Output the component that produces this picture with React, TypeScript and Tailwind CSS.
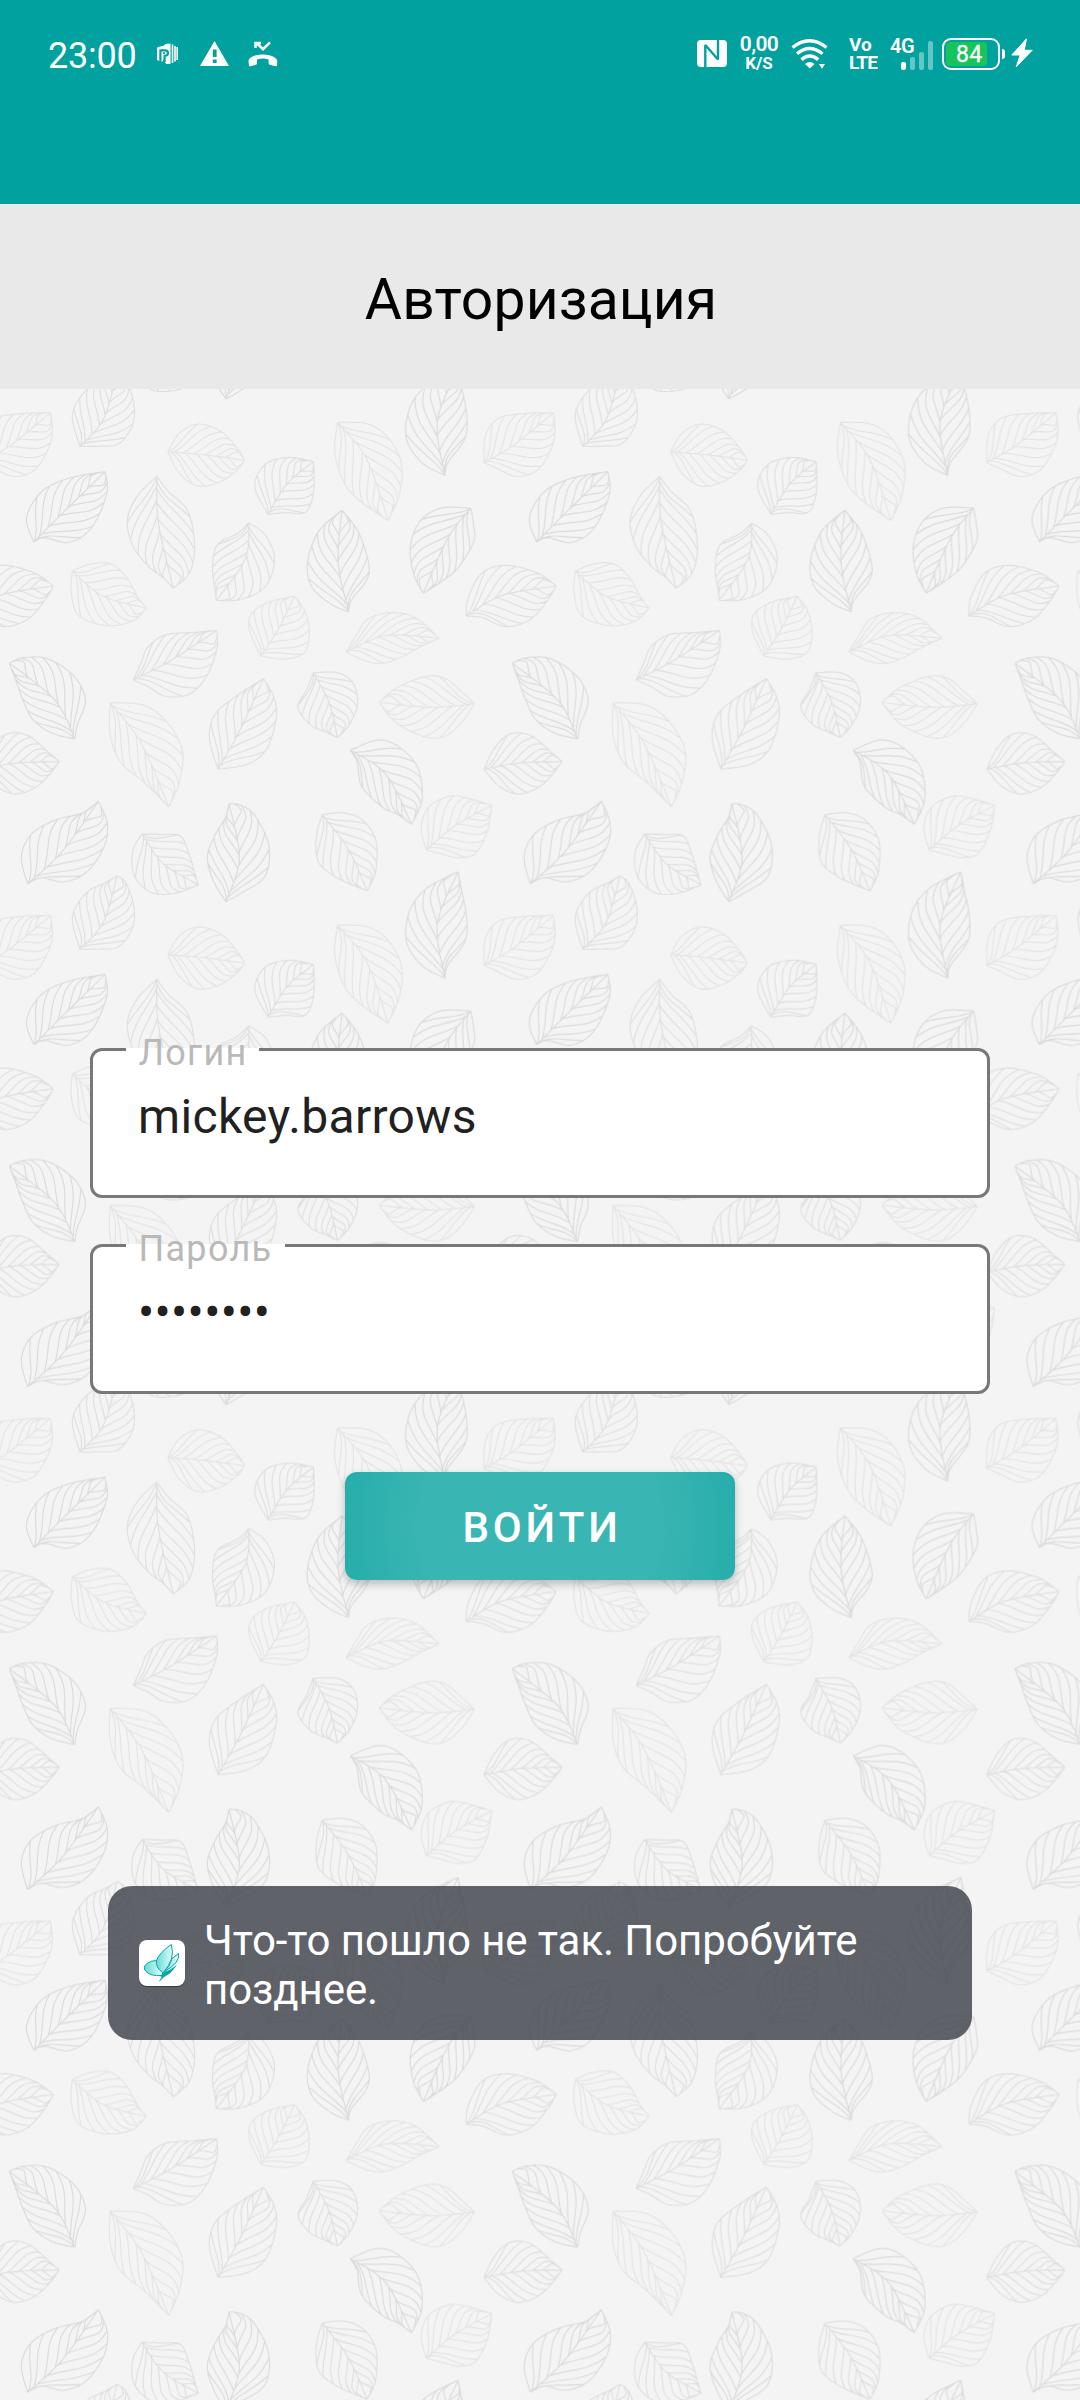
import React from "react";

type Pt = [number, number];

interface LeafShape {
  base: Pt;
  tip: Pt;
  mid: Pt;
  a: Pt[];
  b: Pt[];
  tone: string;
}

const DARK = "#dbdbdb";
const MEDIUM = "#dfdfdf";
const LIGHT = "#e4e4e4";

// Side length of one repeat of the wallpaper, in leaf units
const TILE = 1460;

const LEAVES: LeafShape[] = [
  { base: [98, 470], tip: [305, 266], mid: [180, 388], a: [[77, 400], [120, 325], [200, 285]], b: [[130, 458], [200, 471], [265, 430], [310, 330]], tone: DARK },
  { base: [232, 193], tip: [340, -20], mid: [300, 115], a: [[210, 100], [250, 30], [305, 0]], b: [[290, 192], [345, 185], [385, 130], [388, 65], [365, 0]], tone: MEDIUM },
  { base: [1405, 240], tip: [1607, 95], mid: [1490, 190], a: [[1410, 160], [1450, 110], [1530, 97]], b: [[1440, 255], [1500, 280], [1560, 262], [1600, 200], [1612, 150]], tone: LIGHT },
  { base: [487, 208], tip: [710, 233], mid: [600, 218], a: [[520, 155], [575, 128], [640, 148], [690, 200]], b: [[520, 270], [575, 308], [640, 295], [690, 260]], tone: LIGHT },
  { base: [455, 280], tip: [503, 605], mid: [460, 415], a: [[400, 335], [370, 405], [385, 480], [430, 540], [475, 575]], b: [[490, 325], [545, 380], [565, 480], [550, 560]], tone: MEDIUM },
  { base: [778, 390], tip: [910, 237], mid: [835, 300], a: [[740, 310], [770, 245], [840, 225]], b: [[830, 385], [885, 385], [908, 340], [912, 280]], tone: MEDIUM },
  { base: [722, 415], tip: [628, 640], mid: [712, 520], a: [[690, 445], [630, 480], [617, 550], [625, 610]], b: [[770, 450], [797, 520], [770, 600], [700, 637]], tone: MEDIUM },
  { base: [1012, 673], tip: [993, 378], mid: [982, 530], a: [[960, 650], [905, 600], [893, 530], [925, 440]], b: [[1020, 640], [1065, 580], [1070, 530], [1040, 440]], tone: DARK },
  { base: [980, 123], tip: [1127, 408], mid: [1065, 230], a: [[972, 210], [1000, 300], [1050, 355]], b: [[1065, 127], [1125, 165], [1165, 240], [1160, 330]], tone: LIGHT },
  { base: [1292, 277], tip: [1330, -32], mid: [1270, 120], a: [[1225, 240], [1180, 170], [1190, 80], [1240, 15]], b: [[1300, 240], [1350, 170], [1355, 100], [1340, 20]], tone: DARK },
  { base: [1367, 372], tip: [1229, 619], mid: [1300, 460], a: [[1280, 372], [1220, 410], [1192, 480], [1200, 560]], b: [[1375, 420], [1375, 470], [1330, 545], [1275, 590]], tone: DARK },
  { base: [1353, 685], tip: [1615, 598], mid: [1460, 625], a: [[1360, 630], [1400, 560], [1470, 538], [1560, 560]], b: [[1400, 690], [1470, 716], [1540, 695], [1590, 640]], tone: MEDIUM },
  { base: [210, 555], tip: [425, 662], mid: [300, 628], a: [[260, 535], [320, 533], [365, 570], [400, 630]], b: [[207, 620], [230, 685], [310, 713], [385, 700]], tone: LIGHT },
  { base: [387, 871], tip: [629, 727], mid: [500, 812], a: [[410, 820], [430, 775], [480, 740], [560, 733]], b: [[430, 890], [480, 918], [550, 912], [600, 860], [630, 780]], tone: MEDIUM },
  { base: [758, 802], tip: [855, 628], mid: [810, 720], a: [[725, 730], [730, 680], [780, 645]], b: [[830, 810], [885, 790], [898, 730], [885, 670]], tone: LIGHT },
  { base: [1005, 790], tip: [1275, 750], mid: [1120, 742], a: [[1035, 740], [1070, 693], [1140, 675], [1210, 692]], b: [[1060, 815], [1110, 823], [1165, 805], [1220, 775]], tone: LIGHT },
  { base: [217, 1042], tip: [27, 822], mid: [160, 930], a: [[150, 1025], [95, 985], [65, 925], [45, 870]], b: [[225, 1000], [248, 930], [215, 860], [140, 810], [70, 806]], tone: DARK },
  { base: [320, 937], tip: [490, 1240], mid: [410, 1055], a: [[320, 1030], [350, 1110], [420, 1170]], b: [[420, 945], [490, 1000], [530, 1080], [520, 1170]], tone: LIGHT },
  { base: [633, 1130], tip: [765, 867], mid: [700, 1010], a: [[608, 1040], [625, 970], [690, 915]], b: [[720, 1115], [775, 1070], [802, 980], [795, 920]], tone: MEDIUM },
  { base: [909, 850], tip: [980, 1038], mid: [955, 935], a: [[890, 900], [865, 950], [900, 1000], [945, 1022]], b: [[980, 850], [1025, 880], [1038, 940], [1015, 1000]], tone: MEDIUM },
  { base: [1378, 940], tip: [1101, 936], mid: [1250, 950], a: [[1340, 905], [1290, 865], [1230, 862], [1150, 895]], b: [[1340, 995], [1290, 1035], [1230, 1035], [1150, 995]], tone: LIGHT },
  { base: [1405, 1130], tip: [1632, 1108], mid: [1510, 1112], a: [[1435, 1070], [1480, 1028], [1540, 1032], [1600, 1080]], b: [[1450, 1180], [1505, 1202], [1560, 1185], [1600, 1150]], tone: MEDIUM },
  { base: [1017, 1075], tip: [1195, 1290], mid: [1120, 1145], a: [[1037, 1110], [1050, 1180], [1110, 1240], [1155, 1262]], b: [[1100, 1045], [1165, 1070], [1215, 1130], [1225, 1220]], tone: DARK },
  { base: [1238, 1365], tip: [1428, 1235], mid: [1320, 1295], a: [[1223, 1300], [1245, 1240], [1310, 1208], [1380, 1220]], b: [[1280, 1375], [1330, 1387], [1380, 1375], [1415, 1310]], tone: LIGHT },
  { base: [80, 1463], tip: [286, 1223], mid: [180, 1370], a: [[62, 1385], [90, 1320], [160, 1278], [240, 1257]], b: [[120, 1445], [185, 1457], [250, 1430], [300, 1360], [312, 1290]], tone: DARK },
  { base: [412, 1318], tip: [576, 1466], mid: [475, 1405], a: [[470, 1320], [525, 1325], [550, 1380], [565, 1430]], b: [[385, 1370], [390, 1440], [440, 1488], [510, 1490]], tone: MEDIUM },
  { base: [656, 1515], tip: [665, 1230], mid: [695, 1390], a: [[620, 1455], [602, 1385], [625, 1320], [655, 1270]], b: [[700, 1490], [770, 1440], [780, 1350], [740, 1265], [700, 1235]], tone: DARK },
  { base: [935, 1262], tip: [1066, 1483], mid: [1010, 1360], a: [[918, 1330], [925, 1400], [970, 1440], [1020, 1465]], b: [[1000, 1257], [1055, 1280], [1092, 1340], [1090, 1430]], tone: MEDIUM },
];

// Samples a Catmull-Rom spline through the points
function sample(points: Pt[]): Pt[] {
  const out: Pt[] = [];
  for (let i = 0; i < points.length - 1; i++) {
    const p0 = points[Math.max(i - 1, 0)];
    const p1 = points[i];
    const p2 = points[i + 1];
    const p3 = points[Math.min(i + 2, points.length - 1)];
    for (let s = 0; s < 10; s++) {
      const t = s / 10;
      const f = (k: 0 | 1) =>
        0.5 *
        (2 * p1[k] +
          (p2[k] - p0[k]) * t +
          (2 * p0[k] - 5 * p1[k] + 4 * p2[k] - p3[k]) * t * t +
          (3 * p1[k] - p0[k] - 3 * p2[k] + p3[k]) * t * t * t);
      out.push([f(0), f(1)]);
    }
  }
  out.push(points[points.length - 1]);
  return out;
}

// Point at a fraction of the polyline's length
function along(line: Pt[], fraction: number): Pt {
  const lengths = line.slice(1).map((p, i) => Math.hypot(p[0] - line[i][0], p[1] - line[i][1]));
  let rest = lengths.reduce((x, y) => x + y, 0) * fraction;
  for (let i = 0; i < lengths.length; i++) {
    if (rest <= lengths[i]) {
      const t = rest / (lengths[i] || 1);
      return [line[i][0] + (line[i + 1][0] - line[i][0]) * t, line[i][1] + (line[i + 1][1] - line[i][1]) * t];
    }
    rest -= lengths[i];
  }
  return line[line.length - 1];
}

const toPath = (line: Pt[]) => "M" + line.map((p) => `${p[0].toFixed(1)} ${p[1].toFixed(1)}`).join("L");

// Where each vein leaves the rib and where it meets the edge
const VEINS: Pt[] = [
  [0.01, 0.4],
  [0.08, 0.53],
  [0.2, 0.65],
  [0.34, 0.75],
  [0.48, 0.84],
  [0.62, 0.91],
  [0.75, 0.96],
];

function leafPath(leaf: LeafShape): string {
  const rib = sample([leaf.base, leaf.mid, leaf.tip]);
  const parts = [toPath(rib)];
  [leaf.a, leaf.b].forEach((side, index) => {
    const edge = sample([leaf.base, ...side, leaf.tip]);
    parts.push(toPath(edge));
    VEINS.forEach(([from, to]) => {
      const shift = index === 0 ? 0 : 0.03;
      const s = along(rib, from + shift);
      const e = along(edge, to);
      const r = along(rib, Math.min(from + shift + 0.16, 1));
      const q = along(edge, Math.max(to - 0.16, 0));
      const c1: Pt = [r[0] * 0.65 + q[0] * 0.35, r[1] * 0.65 + q[1] * 0.35];
      const c2: Pt = [q[0] * 0.72 + r[0] * 0.28, q[1] * 0.72 + r[1] * 0.28];
      parts.push(
        `M${s[0].toFixed(1)} ${s[1].toFixed(1)}C${c1[0].toFixed(1)} ${c1[1].toFixed(1)} ${c2[0].toFixed(1)} ${c2[1].toFixed(1)} ${e[0].toFixed(1)} ${e[1].toFixed(1)}`,
      );
    });
  });
  return parts.join("");
}

const SHIFTS: Pt[] = [
  [0, 0],
  [-TILE, 0],
  [0, TILE],
  [0, -TILE],
  [-TILE, TILE],
  [-TILE, -TILE],
];

function LeafWallpaper() {
  return (
    <svg className="absolute inset-0 h-full w-full" aria-hidden="true">
      <defs>
        <g id="leaves" fill="none" strokeWidth="3.400" strokeLinejoin="round">
          {LEAVES.map((leaf, i) => (
            <path key={i} d={leafPath(leaf)} stroke={leaf.tone} />
          ))}
        </g>
        <pattern id="wallpaper" width={TILE} height={TILE} patternUnits="userSpaceOnUse" patternTransform="translate(0 380) scale(0.34439)">
          {SHIFTS.map(([x, y]) => (
            <use key={`${x}:${y}`} href="#leaves" x={x} y={y} />
          ))}
        </pattern>
      </defs>
      <rect width="100%" height="100%" fill="url(#wallpaper)" />
    </svg>
  );
}

function StatusBar() {
  return (
    <div className="flex h-[108px] items-start text-white">
      <span className="ml-[48px] mt-[35px] w-[109px] text-[36px] leading-[42px] tracking-[-0.2px]">23:00</span>
      <svg className="mt-[43px]" width="21" height="22" viewBox="0 0 21 22">
        <path fill="#fff" d="M0 5.500Q0 4.300 1.300 4L7 2.500Q8 1 10 .800L13.500.500V21L9.500 21 8 19.500V14.500L5 19 0 17z" />
        <path fill="none" stroke="#00a19f" strokeWidth="2.200" d="M3.400 20V7.300H8q3 0 3 2.700T8 12.800H7.600V19" />
        <rect x="6" y="9.200" width="1.800" height="1.800" fill="#00a19f" />
        <path fill="none" stroke="#fff" strokeWidth="1.600" d="M15.500 1.500v18.500M18 3v15.500M20.200 4v13" />
      </svg>
      <svg className="ml-[22px] mt-[41px]" width="29" height="25" viewBox="0 0 29 25">
        <path fill="#fff" fillRule="evenodd" d="M14.500 0L29 25H0zM12.800 8.500v7.500h3.800V8.500zM12.800 18.500v3.500h3.800v-3.500z" />
      </svg>
      <svg className="ml-[19px] mt-[41px]" width="30" height="26" viewBox="0 0 30 26">
        <path fill="none" stroke="#fff" strokeWidth="2.500" d="M8.500 2l6.500 6.200L22 1.300M7.500 7V2H13" />
        <path fill="#fff" d="M.5 20C1 16.500 7 13.500 15 13.500S29 16.500 29.300 20L29 24.500q-.2 1-1.400.8l-6-1.600q-1-.3-1-1.300v-4q-6-1.700-11.600 0v4q0 1-1 1.300l-5.600 1.500q-1.200.3-1.400-.8z" />
      </svg>

      <svg className="ml-auto mt-[40px]" width="30" height="27" viewBox="0 0 30 27">
        <rect width="30" height="27" rx="4" fill="#fff" />
        <path d="M8.300 28V5L21 19.500V-1" fill="none" stroke="#00a19f" strokeWidth="2.400" strokeLinejoin="bevel" />
      </svg>
      <div className="ml-[12px] mt-[34px] w-[40px] text-center">
        <div className="text-[21px] font-semibold leading-[21px] tracking-[-0.6px]">0,00</div>
        <div className="text-[17px] font-bold leading-[16px]">K/S</div>
      </div>
      <svg className="ml-[12px] mt-[39px]" width="38" height="30" viewBox="0 0 38 30">
        <g fill="none" stroke="#fff" strokeWidth="3.400">
          <path d="M1.500 8.500q17-13.500 34 0" />
          <path d="M6 14.800q12.500-10.500 25.500 0" />
          <path d="M10.500 20.600q8.300-7 16.700 0" />
        </g>
        <path fill="#fff" d="M14 25q4.800-3.800 9.600 0l-4.800 4.500zM28 25h6l-3 4.800z" />
      </svg>
      <div className="ml-[20px] mt-[36px] w-[32px] text-[19px] font-bold leading-[18px]">
        <div className="w-[24px]">Vo</div>
        <div className="w-[30px] tracking-[-0.9px]">LTE</div>
      </div>
      <div className="relative ml-[9px] h-[40px] w-[52px]">
        <span className="absolute left-0 top-[36px] text-[20px] font-semibold leading-[20px] tracking-[-0.5px]">4G</span>
        <svg className="absolute left-[11px] top-[40px]" width="33" height="30" viewBox="0 0 33 30" fill="#fff">
          <rect x="0" y="22" width="5" height="8" rx="2" />
          <rect x="9" y="17" width="5" height="13" rx="2" opacity=".4" />
          <rect x="18" y="12" width="5" height="18" rx="2" opacity=".4" />
          <rect x="27" y="1" width="5" height="29" rx="2" opacity=".4" />
        </svg>
      </div>
      <div className="mt-[38px] flex h-[32px] w-[58px] rounded-[9px] border-2 border-white p-[2px]">
        <div className="h-full w-[41px] rounded-[4px] bg-[#17c45c] pl-[10px]">
          <span className="block w-[36px] text-[23px] leading-[25px] tracking-[0.300px] [-webkit-text-stroke:0.3px_white]">84</span>
        </div>
      </div>
      <span className="ml-[2px] mt-[49px] h-[10px] w-[3px] rounded-r-[3px] bg-white" />
      <svg className="ml-[6px] mr-[47px] mt-[38px]" width="22" height="30" viewBox="0 0 22 30">
        <path fill="#fff" stroke="#fff" strokeWidth="1" strokeLinejoin="round" d="M15.500.800L.8 17h8.400L5.200 28.800 21.200 12.300h-8z" />
      </svg>
    </div>
  );
}

interface FieldProps {
  label: string;
  value: string;
  notchClass: string;
}

function Field({ label, value, notchClass }: FieldProps) {
  return (
    <div className="relative h-[150px] w-[900px] rounded-[12px] border-[3px] border-[#787878] bg-white pl-[45px] pt-[38px]">
      <span className={`absolute -top-[3px] left-[33px] h-[3px] bg-white ${notchClass}`} />
      <span className="absolute -top-[19px] left-[45.500px] text-[36px] leading-[42px] tracking-[1.300px] text-[#b9b9b9]">{label}</span>
      <span className="block text-[48px] leading-[56px] tracking-[0.340px] text-[#212121]">{value}</span>
    </div>
  );
}

function ButterflyIcon() {
  return (
    <svg className="h-[46px] w-[46px] shrink-0 rounded-[8px] bg-white shadow-[0_1px_1px_rgba(0,0,0,0.4)]" viewBox="0 0 46 46">
      <defs>
        <linearGradient id="wing" x1="0" x2="1">
          <stop offset="0" stopColor="#5fdcd6" />
          <stop offset="1" stopColor="#e6fbfa" />
        </linearGradient>
      </defs>
      <g stroke="#0aa3a1" strokeWidth="1" strokeLinejoin="round">
        <path fill="url(#wing)" d="M25 32Q31 26 33 18.500L39.500 13.500Q40.500 18 37 22.500T25 32z" />
        <path fill="url(#wing)" d="M23.500 35.500Q11 36.500 6.500 31 3.500 27 8 23.500 12 20.500 17.500 20.500L23.500 30z" />
        <path fill="url(#wing)" d="M24 33Q16 27 17.500 20.500 20 13 32.300 4.500 34.500 12 32.500 19 30.500 25 24 33z" />
        <path fill="#0aa3a1" strokeWidth=".6" d="M20.500 41l2.500-4-1.500-1 3.500-3.500 5-2L37 26l-6 7-6 3.800z" />
      </g>
    </svg>
  );
}

export default function App() {
  return (
    <div className="relative flex h-[2400px] w-[1080px] flex-col overflow-hidden bg-[#f4f4f4] font-['Roboto',sans-serif]">
      <LeafWallpaper />
      <header className="relative h-[204px] shrink-0 bg-[#00a19f]">
        <StatusBar />
      </header>
      <div className="relative flex h-[185px] shrink-0 items-center justify-center bg-[#e9e9e9] pl-[2px] pt-[6px]">
        <h1 className="text-[57px] leading-[68px] tracking-[0.120px] text-black">Авторизация</h1>
      </div>
      <main className="relative flex flex-col items-center pt-[659px]">
        <Field label="Логин" value="mickey.barrows" notchClass="w-[133px]" />
        <div className="h-[46px]" />
        <Field label="Пароль" value="••••••••" notchClass="w-[159px]" />
        <button className="mt-[78px] flex h-[108px] w-[390px] items-center justify-center rounded-[12px] bg-[radial-gradient(circle_at_center,#39b5b3_0%,#39b5b3_60%,#26adab_100%)] pl-[4px] pt-[3px] text-[42px] font-medium tracking-[3.750px] text-white shadow-[0_4px_9px_rgba(0,0,0,0.24)]">
          ВОЙТИ
        </button>
        <div className="mt-[306px] flex h-[154px] w-[864px] items-center rounded-[24px] bg-[#444850]/85 pl-[31px]">
          <ButterflyIcon />
          <p className="ml-[19px] mt-[4px] w-[690px] text-[42px] leading-[49px] tracking-[-0.080px] text-white">Что-то пошло не так. Попробуйте позднее.</p>
        </div>
      </main>
    </div>
  );
}
